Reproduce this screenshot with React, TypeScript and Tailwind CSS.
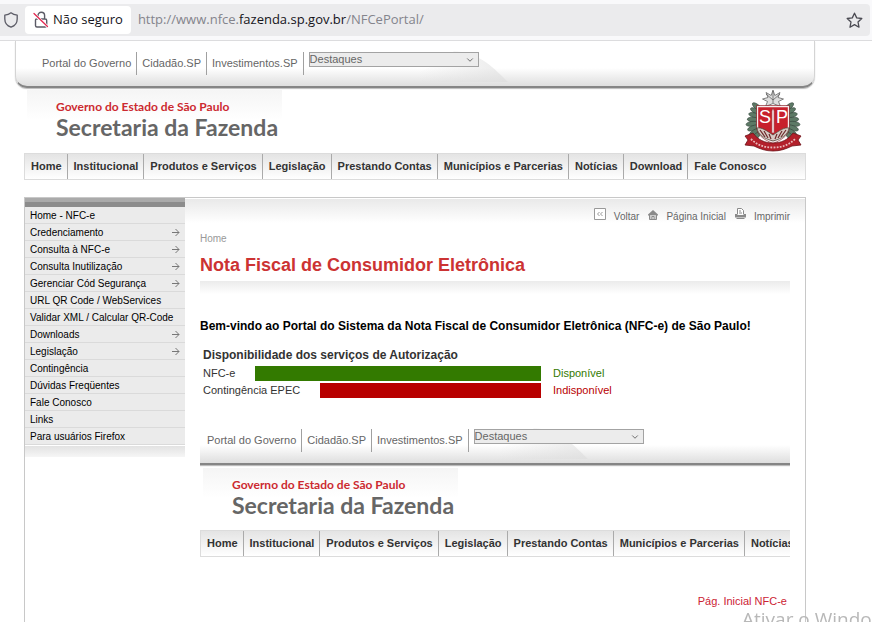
import { ChevronDown } from "lucide-react";

const topLinks = ["Portal do Governo", "Cidadão.SP", "Investimentos.SP"];

const navItems = [
  "Home",
  "Institucional",
  "Produtos e Serviços",
  "Legislação",
  "Prestando Contas",
  "Municípios e Parcerias",
  "Notícias",
  "Download",
  "Fale Conosco",
];

const menuItems = [
  { label: "Home - NFC-e" },
  { label: "Credenciamento", submenu: true },
  { label: "Consulta à NFC-e", submenu: true },
  { label: "Consulta Inutilização", submenu: true },
  { label: "Gerenciar Cód Segurança", submenu: true },
  { label: "URL QR Code / WebServices" },
  { label: "Validar XML / Calcular QR-Code" },
  { label: "Downloads", submenu: true },
  { label: "Legislação", submenu: true },
  { label: "Contingência" },
  { label: "Dúvidas Freqüentes" },
  { label: "Fale Conosco" },
  { label: "Links" },
  { label: "Para usuários Firefox" },
];

const services = [
  { name: "NFC-e", status: "Disponível", bar: "bg-[#337a00]", text: "text-[#337a00]" },
  { name: "Contingência EPEC", status: "Indisponível", bar: "bg-[#b80000]", text: "text-[#b80000]" },
];

function AddressBar() {
  return (
    <div className="border-b border-[#dcdcde] bg-[#f9f9fb] py-1 pr-[2px] font-['Open_Sans','Noto_Sans',sans-serif] text-[13px]">
      <div className="flex h-8 items-center rounded-r bg-[#ebebed] text-[#15141a]">
        <svg className="ml-1 shrink-0" width="14" height="16" viewBox="0 0 14 16" fill="none" stroke="#5b5b66" strokeWidth="1.3" strokeLinejoin="round">
          <path d="M7 .8C8.600 2.100 10.800 2.900 13.200 3.100V7c0 3.900-2.500 6.900-6.200 8.200C3.300 13.900.800 10.900.800 7V3.100C3.200 2.900 5.400 2.100 7 .8z" />
        </svg>
        <button type="button" className="ml-[7px] flex h-7 items-center gap-1 rounded-[4px] bg-white px-2 whitespace-nowrap">
          <svg width="16" height="18" viewBox="0 0 16 18" fill="none" stroke="#5b5b66" strokeWidth="1.400" strokeLinecap="round">
            <path d="M5 8V4.500a3.300 3.300 0 0 1 6.600 0V8M3.500 8h8.700a1.500 1.500 0 0 1 1.500 1.500v5a1.500 1.500 0 0 1-1.500 1.500H4a1.500 1.500 0 0 1-1.500-1.500V9A1 1 0 0 1 3.500 8z" />
            <path d="M1 3L14.500 15.500" stroke="#fff" strokeWidth="3" />
            <path d="M1 2.500L14.500 15.500" stroke="#e22850" strokeWidth="1.300" />
          </svg>
          Não seguro
        </button>
        <span className="ml-[7px] min-w-0 flex-1 truncate text-[#84848c]">
          http://www.nfce.<span className="text-[#15141a]">fazenda.sp.gov.br</span>/NFCePortal/
        </span>
        <button type="button" aria-label="Favoritos" className="mr-[7px]">
          <svg width="17" height="17" viewBox="0 0 17 17" fill="none" stroke="#4a4a52" strokeWidth="1.300" strokeLinejoin="round">
            <path d="M8.500 1.200l2.200 4.700 5.100.6-3.800 3.500 1 5.200-4.500-2.600L4 15.200l1-5.200L1.200 6.500l5.100-.6z" />
          </svg>
        </button>
      </div>
    </div>
  );
}

function Crest() {
  const leaves = [0, 1, 2, 3, 4, 5, 6, 7];
  return (
    <svg width="58" height="62" viewBox="0 0 58 62" role="img" aria-label="Brasão do Estado de São Paulo">
      <g fill="#5d7a66" stroke="#33443a" strokeWidth=".6">
        {leaves.map((i) => (
          <g key={i}>
            <ellipse cx={8 + Math.abs(i - 4) * 1.3} cy={17 + i * 4.2} rx="6" ry="2.4" transform={`rotate(${40 - i * 12} ${8 + Math.abs(i - 4) * 1.3} ${17 + i * 4.2})`} />
            <ellipse cx={50 - Math.abs(i - 4) * 1.3} cy={17 + i * 4.2} rx="6" ry="2.4" transform={`rotate(${-40 + i * 12} ${50 - Math.abs(i - 4) * 1.3} ${17 + i * 4.2})`} />
          </g>
        ))}
      </g>
      <path d="M29 0l1.800 5.500L36 2.500l-2 5 5.500 1.500-5 2.500 2 5L29 13.500l-7.500 3 2-5-5-2.500L24 7.500l-2-5 5.200 3z" fill="#dedede" stroke="#666" strokeWidth=".8" />
      <path d="M29 1v12M22 4l7 6 7-6" stroke="#555" strokeWidth=".7" fill="none" />
      <path d="M13.500 16.500h31V36c0 8-6 12-15.500 16-9.500-4-15.500-8-15.500-16z" fill="#c8202c" stroke="#f6eded" strokeWidth="1.400" />
      <path d="M12.500 15.500h33V36c0 9-7 13.500-16.500 17.500C19.500 49.500 12.500 45 12.500 36z" fill="none" stroke="#8c2a30" strokeWidth=".7" />
      <text x="15" y="33" fill="#fff" fontSize="18" className="font-['Liberation_Sans',sans-serif]">S</text>
      <text x="32" y="33" fill="#fff" fontSize="18" className="font-['Liberation_Sans',sans-serif]">P</text>
      <path d="M29 18l1.200 3v22h-2.400V21z" fill="#f3e3e3" stroke="#8a1a22" strokeWidth=".5" />
      <path d="M13 38c5-1 10 3 16 7 6-4 11-8 16-7-1 7-8 11-16 13-8-2-15-6-16-13z" fill="#d9c9c4" stroke="#443" strokeWidth=".7" />
      <path d="M16 40l5 7M20 41l4 7M25 44l2 5M42 40l-5 7M38 41l-4 7M33 44l-2 5" stroke="#6b2a2a" strokeWidth="1.200" />
      <path d="M1 46l8-3c5 7 12 10 20 10s15-3 20-10l8 3-3 4 3 5-9 1c-6 3-12 5-19 5s-13-2-19-5l-9-1 3-5z" fill="#b3202b" stroke="#6d1118" strokeWidth=".8" />
      <path d="M7 49c6 6 13 8.500 22 8.500S45 55 51 49" fill="none" stroke="#e9b9bb" strokeWidth="1.800" strokeDasharray="1.800 1.300" />
    </svg>
  );
}

interface SiteHeaderProps {
  id: string;
  embedded?: boolean;
}

function SiteHeader({ id, embedded = false }: SiteHeaderProps) {
  return (
    <header className={embedded ? "overflow-hidden" : ""}>
      <div
        className={
          embedded
            ? "relative h-[47px] border-b-2 border-[#858585] bg-linear-to-b from-white from-60% to-[#dedede] pl-[7px] shadow-[0_1px_1px_#bbb]"
            : "relative h-[47px] rounded-b-[12px] border-x border-b-2 border-x-[#d4d4d4] border-b-[#858585] bg-linear-to-b from-white from-60% to-[#dedede] pl-[26px] shadow-[0_1px_1px_#bbb]"
        }
      >
        <svg className={embedded ? "absolute bottom-[4px] left-[260px]" : "absolute bottom-[4px] left-[364px]"} width="128" height="34" viewBox="0 0 128 34">
          <defs>
            <linearGradient id={`${id}-sweep`}>
              <stop offset=".3" stopColor="#dcdcdc" stopOpacity="0" />
              <stop offset="1" stopColor="#dcdcdc" stopOpacity=".6" />
            </linearGradient>
          </defs>
          <path d="M0 34C30 30 54 20 74 3c24 2 36 13 54 31z" fill={`url(#${id}-sweep)`} />
        </svg>
        <div className="relative flex items-start pt-[11px] text-[11px] text-[#666]">
          {topLinks.map((label) => (
            <a key={label} href="#" className="mr-[5px] flex h-[23px] items-center border-r border-[#a0a0a0] pr-[5px] whitespace-nowrap">
              {label}
            </a>
          ))}
          <div className="relative">
            <select
              aria-label="Destaques"
              className="block h-[15px] w-[170px] appearance-none border border-[#a3a3a3] bg-[#ececec] text-[11px] leading-[13px] text-[#666]"
            >
              <option>Destaques</option>
            </select>
            <ChevronDown size={10} color="#555" className="pointer-events-none absolute top-[3px] right-1" />
          </div>
        </div>
      </div>

      <div className={embedded ? "flex h-[65px] justify-between pt-[3px]" : "mx-[9px] flex h-[65px] justify-between pt-[2px]"}>
        <div className="ml-[3px] h-[50px] w-[255px] bg-linear-to-b from-[#f5f5f5] to-white to-60% pt-[9px] pl-[29px] font-['Lato','Open_Sans',sans-serif] font-bold whitespace-nowrap">
          <p className="text-[12px] leading-4 text-[#cc2a30]">Governo do Estado de São Paulo</p>
          <p className="text-[23px] leading-6 text-[#666]">Secretaria da Fazenda</p>
        </div>
        {!embedded && (
          <div className="mr-1">
            <Crest />
          </div>
        )}
      </div>

      <nav
        className={
          embedded
            ? "flex h-[27px] border border-r-0 border-[#dcdcdc] bg-linear-to-b from-[#e4e4e4] to-white"
            : "mx-[9px] flex h-[27px] border border-[#dcdcdc] bg-linear-to-b from-[#e4e4e4] to-white"
        }
      >
        {navItems.map((label) => (
          <a
            key={label}
            href="#"
            className="flex items-center border-r border-[#aaa] pr-[5px] pl-[6px] text-[11px] font-bold whitespace-nowrap text-[#333] last:border-r-0"
          >
            {label}
          </a>
        ))}
      </nav>
    </header>
  );
}

function Sidebar() {
  return (
    <aside className="w-[160px] shrink-0">
      <div className="h-[9px] bg-linear-to-b from-[#aaa] from-40% to-[#8c8c8c] to-40%" />
      <ul>
        {menuItems.map((item) => (
          <li key={item.label} className="border-b border-[#dadada] bg-[#ebebeb]">
            <a href="#" className="flex h-4 items-center justify-between px-[5px] text-[10px] whitespace-nowrap text-black">
              {item.label}
              {item.submenu && (
                <svg width="8" height="9" viewBox="0 0 8 9" fill="none" stroke="#777">
                  <path d="M0 4.500h7M3.500 1L7 4.500 3.500 8" />
                </svg>
              )}
            </a>
          </li>
        ))}
      </ul>
      <div className="mt-px h-[11px] bg-linear-to-b from-[#e2e2e2] to-[#f6f6f6]" />
    </aside>
  );
}

function PageTools() {
  return (
    <div className="flex h-6 items-end justify-end bg-linear-to-b from-[#e9e9e9] to-white pr-[15px] text-[10px] text-[#666]">
      <a href="#" className="flex items-start gap-2">
        <svg width="12" height="12" viewBox="0 0 12 12" fill="none" stroke="#999">
          <path d="M.5.5h11v11H.5z" fill="#fff" />
          <path d="M5.500 4L3.500 6l2 2M8.500 4l-2 2 2 2" />
        </svg>
        <span className="pt-[3px] leading-3">Voltar</span>
      </a>
      <a href="#" className="ml-[9px] flex items-start gap-2">
        <svg className="mt-[2px]" width="10" height="10" viewBox="0 0 10 10">
          <path d="M5 0L10 4.500V5.500H0v-1z" fill="#8a8a8a" />
          <path d="M1.500 5v4.500h7V5M4 9.500v-3h2v3" fill="#ccc" stroke="#8a8a8a" />
        </svg>
        <span className="pt-[3px] leading-3">Página Inicial</span>
      </a>
      <a href="#" className="ml-[9px] flex items-start gap-2">
        <svg width="11" height="12" viewBox="0 0 11 12">
          <path d="M2.500 6.500V.5h4l2 2v4" fill="#fff" stroke="#8a8a8a" />
          <path d="M4 3h2M4 5h3" stroke="#8a8a8a" />
          <path d="M0 6h2v1h7V6h2v3.500H0zM1.500 10h8v1h-8z" fill="#8a8a8a" />
        </svg>
        <span className="pt-[3px] leading-3">Imprimir</span>
      </a>
    </div>
  );
}

export default function App() {
  return (
    <div className="flex min-h-screen flex-col bg-white font-['Liberation_Sans',Arial,sans-serif]">
      <AddressBar />
      <div className="ml-[15px] flex w-full max-w-[800px] flex-1 flex-col">
        <SiteHeader id="topo" />

        <div className="mx-[9px] mt-[17px] flex flex-1 border border-b-0 border-[#c8c8c8]">
          <Sidebar />
          <main className="min-w-0 flex-1 pt-px">
            <PageTools />
            <div className="px-[15px]">
              <a href="#" className="mt-[9px] block text-[10px] leading-[14px] text-[#999]">
                Home
              </a>
              <h1 className="mt-2 text-[18px] leading-[22px] font-bold text-[#cc3333]">Nota Fiscal de Consumidor Eletrônica</h1>
              <div className="mt-[5px] h-[13px] bg-linear-to-b from-[#ebebeb] to-white" />
              <p className="mt-6 text-[12px] leading-4 font-bold whitespace-nowrap text-black">
                Bem-vindo ao Portal do Sistema da Nota Fiscal de Consumidor Eletrônica (NFC-e) de São Paulo!
              </p>

              <section className="mt-3 pl-[3px] text-[#333]">
                <h2 className="pb-px text-[12px] leading-[18px] font-bold">Disponibilidade dos serviços de Autorização</h2>
                <ul className="text-[11px]">
                  {services.map((service) => (
                    <li key={service.name} className="flex h-[17px] items-center">
                      <div className="flex w-[338px] items-center gap-5">
                        <span>{service.name}</span>
                        <span className={`h-[15px] flex-1 ${service.bar}`} />
                      </div>
                      <span className={`ml-3 ${service.text}`}>{service.status}</span>
                    </li>
                  ))}
                </ul>
              </section>

              <div className="mt-[19px]">
                <SiteHeader id="rodape" embedded />
              </div>

              <div className="mt-9 pr-[3px] text-right text-[11px] leading-4">
                <a href="#" className="text-[#cc2233]">
                  Pág. Inicial NFC-e
                </a>
              </div>
            </div>
          </main>
        </div>
      </div>

      <div className="pointer-events-none fixed right-0 bottom-0 h-[14px] w-[130px] overflow-hidden font-['Open_Sans','Noto_Sans',sans-serif] text-[19px] leading-[22px] whitespace-nowrap text-[#b8b8b8]">
        Ativar o Windows
      </div>
    </div>
  );
}
